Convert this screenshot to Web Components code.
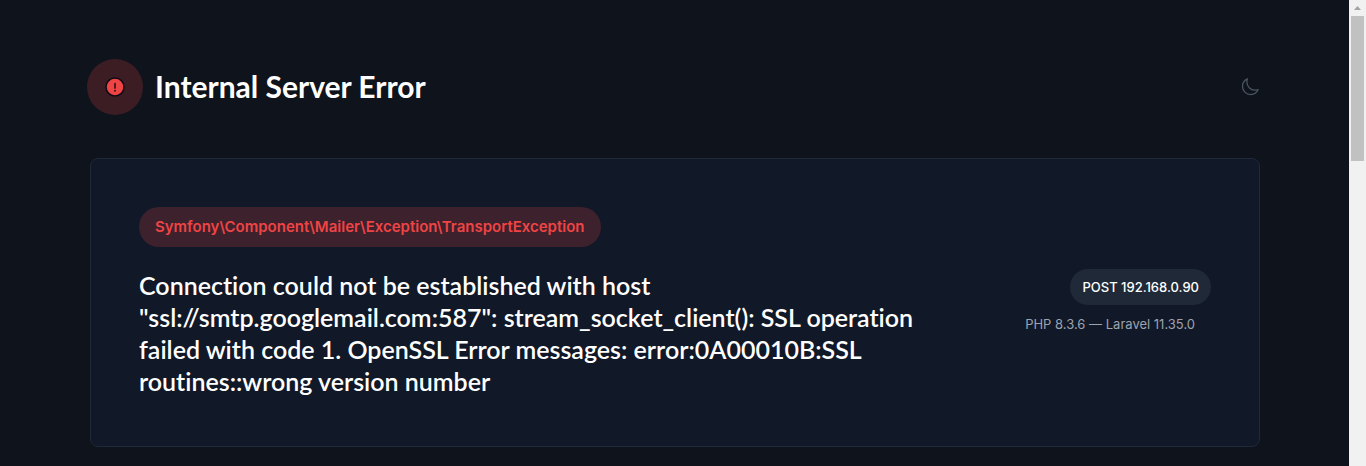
<!DOCTYPE html>
<html lang="en">
<head>
<meta charset="utf-8">
<title>Internal Server Error</title>
<style>
  html, body { margin: 0; height: 100%; }
  body {
    overflow: hidden;
    background: #0f131c;
    color: #fff;
    font-family: Lato, "Liberation Sans", sans-serif;
    font-variant-ligatures: none;
  }
</style>
</head>
<body>
<error-page>
  <page-header slot="header">Internal Server Error</page-header>
  <exception-card>
    <exception-badge slot="class">Symfony\Component\Mailer\Exception\TransportException</exception-badge>
    <span slot="message">Connection could not be established with host "ssl://smtp.googlemail.com:587": stream_socket_client(): SSL operation failed with code 1. OpenSSL Error messages: error:0A00010B:SSL routines::wrong version number</span>
    <request-info slot="request">POST 192.168.0.90<span slot="versions">PHP 8.3.6 — Laravel 11.35.0</span></request-info>
  </exception-card>
</error-page>

<script>
  const define = (name, html) => {
    const template = document.createElement('template');
    template.innerHTML = html;
    customElements.define(name, class extends HTMLElement {
      constructor() {
        super();
        this.attachShadow({ mode: 'open' }).append(template.content.cloneNode(true));
      }
    });
  };

  define('error-page', `
    <style>
      :host { display: grid; grid-template-columns: minmax(0, 1fr) auto; height: 100vh; }
      main { overflow: hidden; padding: 59px 89px 0 90px; }
      ::slotted([slot="header"]) { margin-bottom: 43px; }
    </style>
    <main><slot name="header"></slot><slot></slot></main>
    <scroll-track></scroll-track>`);

  define('scroll-track', `
    <style>
      :host { display: flex; flex-direction: column; width: 17px; background: #f1f1f1; }
      svg { display: block; width: 17px; height: 16px; }
      div { height: 145px; margin: 0 2px; background: #c1c1c1; }
    </style>
    <svg viewBox="0 0 17 16" aria-hidden="true"><path d="M5 10 8.500 6 12 10Z" fill="#a3a3a3"/></svg>
    <div></div>`);

  define('alert-mark', `
    <style>
      :host {
        display: flex; align-items: center; justify-content: center;
        width: 56px; height: 56px; border-radius: 50%;
        background: rgb(239 68 68 / 20%);
      }
      svg { display: block; width: 24px; height: 24px; }
    </style>
    <svg viewBox="0 0 24 24" aria-hidden="true">
      <circle cx="12" cy="12" r="9" fill="#ef4444" stroke="#100b16" stroke-width="1.5"/>
      <path d="M12 8.500v4.500" stroke="#3b1219" stroke-width="1.700" stroke-linecap="round"/>
      <circle cx="12" cy="15.700" r="1" fill="#3b1219"/>
    </svg>`);

  define('page-header', `
    <style>
      :host { display: flex; align-items: center; justify-content: space-between; margin-left: -3px; }
      .title { display: flex; align-items: center; gap: 12px; }
      h1 { margin: 0; padding-bottom: 2px; font-size: 30px; line-height: 36px; font-weight: 700; }
      button { display: block; padding: 0; border: 0; background: none; color: #4b5563; }
      svg { display: block; width: 20px; height: 20px; }
    </style>
    <div class="title"><alert-mark></alert-mark><h1><slot></slot></h1></div>
    <button type="button" aria-label="Theme">
      <svg viewBox="0 0 24 24" fill="none" stroke="currentColor" stroke-width="1.500" stroke-linecap="round" stroke-linejoin="round">
        <path d="M21.752 15.002A9.718 9.718 0 0 1 18 15.750c-5.385 0-9.750-4.365-9.750-9.750 0-1.330.266-2.597.748-3.752A9.753 9.753 0 0 0 3 11.250C3 16.635 7.365 21 12.750 21a9.753 9.753 0 0 0 9.002-5.998Z"/>
      </svg>
    </button>`);

  define('exception-badge', `
    <style>
      :host {
        display: inline-block; padding: 8px 16px; border-radius: 20px;
        background: rgb(239 68 68 / 20%); color: #ef4444;
        font: 600 15px/24px Inter, sans-serif;
      }
    </style>
    <slot></slot>`);

  define('exception-card', `
    <style>
      :host {
        display: block; padding: 48px 48px 49px;
        border: 1px solid #1f2937; border-radius: 8px; background: #111827;
      }
      .class { display: flex; margin-bottom: 22px; }
      .details { display: flex; align-items: flex-start; }
      h2 { flex: 3; min-width: 0; margin: 0; font-size: 25px; line-height: 32px; font-weight: 600; }
      .request { flex: 1; display: flex; justify-content: flex-end; }
    </style>
    <div class="class"><slot name="class"></slot></div>
    <div class="details">
      <h2><slot name="message"></slot></h2>
      <div class="request"><slot name="request"></slot></div>
    </div>`);

  define('request-info', `
    <style>
      :host {
        display: flex; flex-direction: column; align-items: flex-end; gap: 9px;
        font: 400 13px/20px Inter, sans-serif; white-space: nowrap;
      }
      .request { padding: 8px 12px; border-radius: 18px; background: #1f2937; font-weight: 500; }
      .versions { padding-right: 16px; color: #9ca3af; }
    </style>
    <div class="request"><slot></slot></div>
    <div class="versions"><slot name="versions"></slot></div>`);
</script>
</body>
</html>
